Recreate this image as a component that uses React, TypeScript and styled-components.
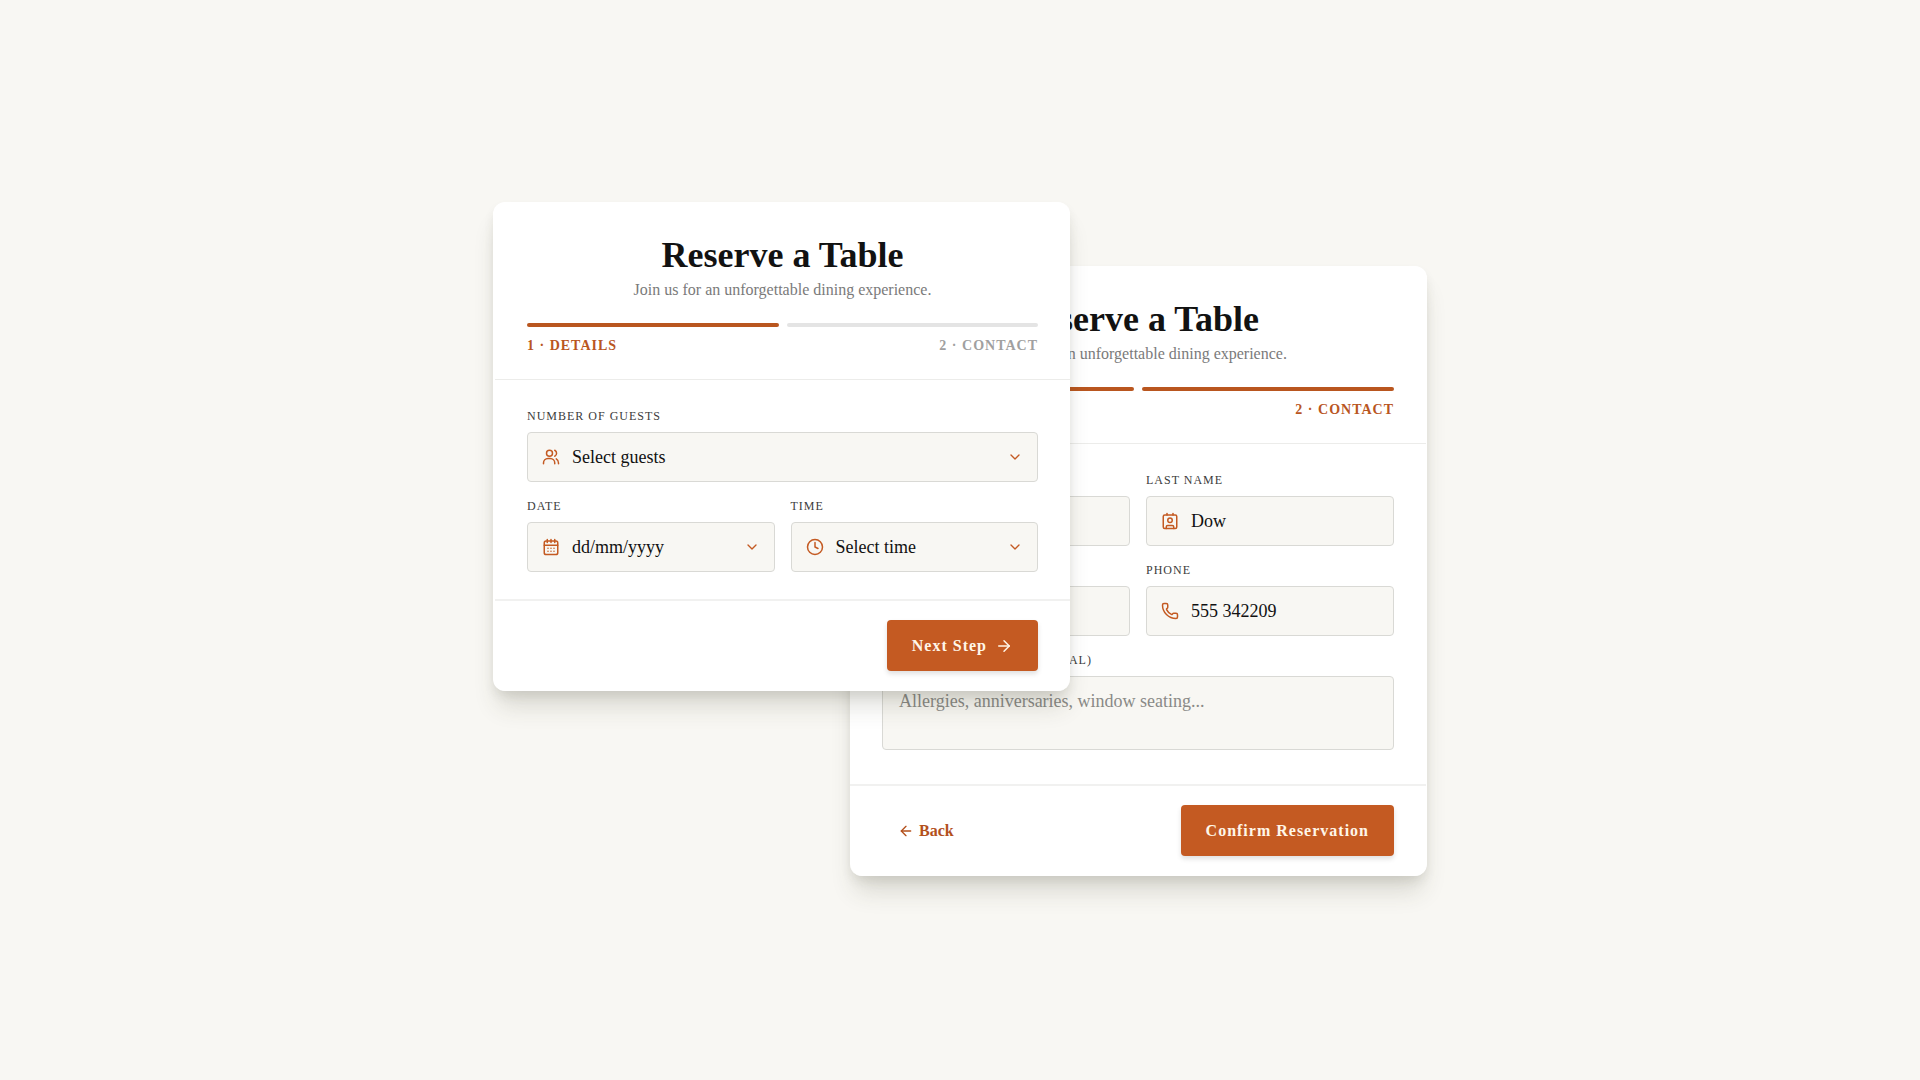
import React from "react";
import styled, { createGlobalStyle } from "styled-components";
import { ArrowLeft, ArrowRight, ChevronDown, Clock, Contact, Mail, Phone, User } from "lucide-react";

const accent = "#c45a22";
const serif = `"Liberation Serif", "Times New Roman", serif`;

const GlobalStyle = createGlobalStyle`
  * { box-sizing: border-box; }
  body { margin: 0; background: #f8f7f3; color: #111; font-family: ${serif}; }
  button, input, select, textarea { font-family: inherit; color: inherit; }
`;

const Page = styled.main`
  min-height: 100vh;
  display: flex;
  justify-content: center;
  align-items: flex-start;
  padding: 202px 24px;
`;

const Card = styled.form<{ $front?: boolean }>`
  flex: 0 1 577px;
  min-width: 0;
  background: #fff;
  border: solid #fff;
  border-width: ${(p) => (p.$front ? "1px 0 1px 2px" : "1px 1px 1px 0")};
  border-radius: 12px;
  box-shadow: 0 20px 25px -5px rgba(60, 60, 40, 0.16), 0 6px 12px -2px rgba(60, 60, 40, 0.12);
  z-index: ${(p) => (p.$front ? 2 : 1)};
  margin-top: ${(p) => (p.$front ? "0" : "64px")};
  margin-left: ${(p) => (p.$front ? "0" : "-220px")};
`;

const Header = styled.header`
  padding: 32px 32px 21px;
  text-align: center;
  border-bottom: 1px solid #ececea;
`;

const Title = styled.h1`
  margin: 0;
  font-size: 36px;
  line-height: 40px;
  font-weight: 700;
  color: #121212;
`;

const Subtitle = styled.p`
  margin: 5px 0 23px;
  font-size: 16px;
  line-height: 20px;
  color: #7a7a7a;
`;

const Track = styled.div`
  display: grid;
  grid-template-columns: 1fr 1fr;
  gap: 8px;
`;

const Bar = styled.div<{ $on?: boolean }>`
  height: 4px;
  border-radius: 2px;
  background: ${(p) => (p.$on ? "#b9561f" : "#e4e4e4")};
`;

const Steps = styled.div`
  display: flex;
  justify-content: space-between;
  margin-top: 7px;
`;

const Step = styled.span<{ $on?: boolean }>`
  font-size: 14px;
  line-height: 24px;
  font-weight: 700;
  letter-spacing: 1px;
  color: ${(p) => (p.$on ? "#b9561f" : "#a0a0a0")};
`;

const Body = styled.div`
  display: grid;
  grid-template-columns: 1fr 1fr;
  gap: 16px;
  padding: 28px 32px 27px;
`;

const Field = styled.div<{ $wide?: boolean }>`
  display: flex;
  flex-direction: column;
  gap: 8px;
  min-width: 0;
  grid-column: ${(p) => (p.$wide ? "1 / -1" : "auto")};
`;

const Label = styled.label`
  font-size: 12px;
  line-height: 16px;
  letter-spacing: 1px;
  text-transform: uppercase;
  color: #3c3c3c;
`;

const Box = styled.div`
  display: flex;
  align-items: center;
  gap: 12px;
  height: 50px;
  padding: 0 14px;
  border: 1px solid #d9d9d5;
  border-radius: 4px;
  background: #f8f7f3;
  svg { flex: none; color: ${accent}; }
`;

const controlText = `
  flex: 1;
  min-width: 0;
  padding: 0;
  border: 0;
  outline: 0;
  background: transparent;
  font-size: 18px;
  line-height: 24px;
`;

const Select = styled.select`
  ${controlText}
  appearance: none;
`;

const Input = styled.input`
  ${controlText}
  &::placeholder { color: #111; opacity: 1; }
`;

const Area = styled.textarea`
  display: block;
  width: 100%;
  height: 74px;
  margin-bottom: 7px;
  padding: 12px 16px;
  border: 1px solid #d9d9d5;
  border-radius: 4px;
  background: #f8f7f3;
  outline: 0;
  resize: none;
  font-size: 18px;
  line-height: 24px;
  &::placeholder { color: #8a8a87; opacity: 1; }
`;

const Footer = styled.footer<{ $end?: boolean }>`
  display: flex;
  justify-content: ${(p) => (p.$end ? "flex-end" : "space-between")};
  padding: 19px 32px;
  border-top: 2px solid #f1f1f0;
`;

const Primary = styled.button`
  display: flex;
  align-items: center;
  gap: 8px;
  height: 51px;
  padding: 0 25px;
  border: 0;
  border-radius: 4px;
  background: ${accent};
  color: #fff6e8;
  font-size: 16px;
  font-weight: 700;
  letter-spacing: 1px;
  box-shadow: 0 3px 5px rgba(0, 0, 0, 0.12);
`;

const Back = styled.button`
  display: flex;
  align-items: center;
  gap: 5px;
  padding: 0 16px;
  border: 0;
  background: none;
  color: #b3501c;
  font-size: 16px;
  font-weight: 700;
`;

const Drawing = ({ children }: { children: React.ReactNode }) => (
  <svg width="18" height="18" viewBox="0 0 24 24" fill="none" stroke="currentColor" strokeWidth="2" strokeLinecap="round" strokeLinejoin="round" aria-hidden="true">
    {children}
  </svg>
);

const GuestsIcon = () => (
  <Drawing>
    <circle cx="10" cy="7" r="4" />
    <path d="M2 21v-1a6 6 0 0 1 6-6h3a6 6 0 0 1 6 6v1" />
    <path d="M17 3a4.500 4.500 0 0 1 0 8" />
    <path d="M19 14.500a6 6 0 0 1 3 5.500v1" />
  </Drawing>
);

const CalendarIcon = () => (
  <Drawing>
    <rect x="3" y="4" width="18" height="18" rx="2.500" />
    <path d="M7 2v4M12 2v4M17 2v4M3 9.500h18" />
    <path d="M8 13.500h.01M12 13.500h.01M16 13.500h.01M8 17.500h.01M12 17.500h.01M16 17.500h.01" />
  </Drawing>
);

const CardHeader = ({ step }: { step: number }) => (
  <Header>
    <Title>Reserve a Table</Title>
    <Subtitle>Join us for an unforgettable dining experience.</Subtitle>
    <Track>
      <Bar $on />
      <Bar $on={step === 2} />
    </Track>
    <Steps>
      <Step $on>1 · DETAILS</Step>
      <Step $on={step === 2}>2 · CONTACT</Step>
    </Steps>
  </Header>
);

type TextFieldProps = { id: string; label: string; value: string; icon: React.ReactNode };

const TextField = ({ id, label, value, icon }: TextFieldProps) => (
  <Field>
    <Label htmlFor={id}>{label}</Label>
    <Box>
      {icon}
      <Input id={id} defaultValue={value} />
    </Box>
  </Field>
);

export default function App() {
  return (
    <>
      <GlobalStyle />
      <Page>
        <Card $front>
          <CardHeader step={1} />
          <Body>
            <Field $wide>
              <Label htmlFor="guests">Number of guests</Label>
              <Box>
                <GuestsIcon />
                <Select id="guests"><option>Select guests</option></Select>
                <ChevronDown size={16} />
              </Box>
            </Field>
            <Field>
              <Label htmlFor="date">Date</Label>
              <Box>
                <CalendarIcon />
                <Input id="date" placeholder="dd/mm/yyyy" />
                <ChevronDown size={16} />
              </Box>
            </Field>
            <Field>
              <Label htmlFor="time">Time</Label>
              <Box>
                <Clock size={18} />
                <Select id="time"><option>Select time</option></Select>
                <ChevronDown size={16} />
              </Box>
            </Field>
          </Body>
          <Footer $end>
            <Primary type="button">Next Step <ArrowRight size={18} /></Primary>
          </Footer>
        </Card>
        <Card>
          <CardHeader step={2} />
          <Body>
            <TextField id="first" label="First name" value="" icon={<User size={18} />} />
            <TextField id="last" label="Last name" value="Dow" icon={<Contact size={18} />} />
            <TextField id="email" label="Email" value="" icon={<Mail size={18} />} />
            <TextField id="phone" label="Phone" value="555 342209" icon={<Phone size={18} />} />
            <Field $wide>
              <Label htmlFor="requests">Special requests (optional)</Label>
              <Area id="requests" placeholder="Allergies, anniversaries, window seating..." />
            </Field>
          </Body>
          <Footer>
            <Back type="button"><ArrowLeft size={16} /> Back</Back>
            <Primary type="button">Confirm Reservation</Primary>
          </Footer>
        </Card>
      </Page>
    </>
  );
}
